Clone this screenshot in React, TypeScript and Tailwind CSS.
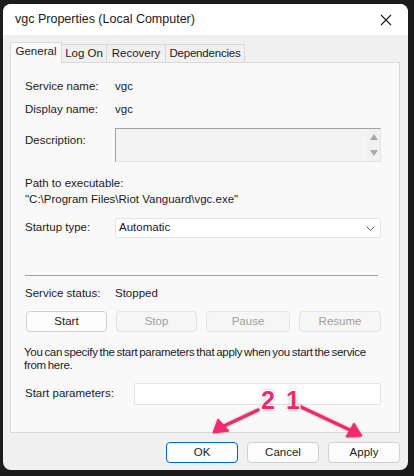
import React from "react";

const font = { fontFamily: '"Liberation Sans", Arial, sans-serif' };

function Btn({ label, disabled, primary, w }: { label: string; disabled?: boolean; primary?: boolean; w: string }) {
  return (
    <div
      className={`${w} h-[21px] flex items-center justify-center rounded-[4px] border text-[11.5px] ${
        disabled
          ? "border-[#e3e3e3] bg-[#f6f6f6] text-[#9d9d9d]"
          : primary
          ? "border-[#0067c0] bg-[#fdfdfd] text-[#1b1b1b]"
          : "border-[#d0d0d0] bg-[#fdfdfd] text-[#1b1b1b]"
      }`}
    >
      {label}
    </div>
  );
}

const numStyle = {
  fontFamily: '"Liberation Sans", Arial, sans-serif',
  textShadow: "1px 1px 0 #fff, -1px -1px 0 #fff, 1px -1px 0 #fff, -1px 1px 0 #fff, 0 1px 0 #fff, 0 -1px 0 #fff, 1px 0 0 #fff, -1px 0 0 #fff, 0 0 4px rgba(0,0,0,0.45)",
};

export default function App() {
  return (
    <div className="relative w-[414px] h-[476px] bg-[#1c1c1c] pt-[4px] pl-[3px]" style={font}>
      <div className="w-[405px] h-[466px] rounded-[8px] overflow-hidden bg-[#f0f0f0] flex flex-col">
        {/* title bar */}
        <div className="h-[31px] bg-white flex items-center pl-[12px] pr-[8px] shrink-0">
          <div className="text-[12.5px] text-[#1b1b1b] flex-1">vgc Properties (Local Computer)</div>
          <svg width="12" height="12" viewBox="0 0 12 12" className="mr-[8px]">
            <path d="M1 1 L11 11 M11 1 L1 11" stroke="#1b1b1b" strokeWidth="1.1" />
          </svg>
        </div>
        {/* body */}
        <div className="px-[7px] pt-[7px] flex flex-col">
          {/* tabs */}
          <div className="flex items-end h-[20px] text-[11.5px] text-[#1b1b1b]">
            <div className="h-[21px] w-[52px] -mb-[1px] bg-[#f9f9f9] border border-b-0 border-[#d9d9d9] flex items-center justify-center pb-[2px] relative z-10">
              General
            </div>
            <div className="h-[18px] w-[45px] border-t border-r border-[#d9d9d9] flex items-center justify-center">Log On</div>
            <div className="h-[18px] w-[59px] border-t border-r border-[#d9d9d9] flex items-center justify-center">Recovery</div>
            <div className="h-[18px] w-[79px] border-t border-r border-[#d9d9d9] flex items-center justify-center tracking-[-0.2px]">Dependencies</div>
          </div>
          {/* panel */}
          <div className="w-[390px] h-[371px] bg-[#f9f9f9] border border-[#d9d9d9] pl-[14px] pr-[18px] text-[11.5px] text-[#1b1b1b] flex flex-col">
            <div className="mt-[15px] h-[18px] flex items-center">
              <div className="w-[90px]">Service name:</div>
              <div>vgc</div>
            </div>
            <div className="mt-[5px] h-[18px] flex items-center">
              <div className="w-[90px]">Display name:</div>
              <div>vgc</div>
            </div>
            <div className="mt-[9px] flex">
              <div className="w-[90px] pt-[4px]">Description:</div>
              <div className="flex-1 h-[34px] border border-t-[#a0a0a0] border-l-[#a0a0a0] border-r-[#e3e3e3] border-b-[#e3e3e3] bg-[#f3f3f3] flex justify-end">
                <div className="w-[13px] bg-[#f0f0f0] flex flex-col items-center justify-between py-[5px]">
                  <svg width="8" height="6" viewBox="0 0 8 6"><path d="M4 0 L8 6 L0 6 Z" fill="#a8a8a8" /></svg>
                  <svg width="8" height="6" viewBox="0 0 8 6"><path d="M0 0 L8 0 L4 6 Z" fill="#a8a8a8" /></svg>
                </div>
              </div>
            </div>
            <div className="mt-[14px] h-[16px] flex items-center">Path to executable:</div>
            <div className="h-[16px] flex items-center">"C:\Program Files\Riot Vanguard\vgc.exe"</div>
            <div className="mt-[10px] flex items-center h-[20px]">
              <div className="w-[90px]">Startup type:</div>
              <div className="flex-1 h-[20px] bg-white border border-[#e5e5e5] rounded-[2px] flex items-center pl-[3px] pr-[5px]">
                <div className="flex-1">Automatic</div>
                <svg width="9" height="5" viewBox="0 0 9 5"><path d="M0.5 0.5 L4.5 4.5 L8.5 0.5" stroke="#5c5c5c" fill="none" strokeWidth="1" /></svg>
              </div>
            </div>
            <div className="mt-[37px] h-px bg-[#a0a0a0] mr-[3px]" />
            <div className="mt-[9px] h-[18px] flex items-center">
              <div className="w-[90px]">Service status:</div>
              <div>Stopped</div>
            </div>
            <div className="mt-[8px] flex gap-[9px] pl-[1px]">
              <Btn label="Start" w="w-[81px]" />
              <Btn label="Stop" w="w-[81px]" disabled />
              <Btn label="Pause" w="w-[84px]" disabled />
              <Btn label="Resume" w="w-[82px]" disabled />
            </div>
            <div className="mt-[14px] leading-[13px] -ml-[1px] tracking-[-0.3px] [word-spacing:-1px]">
              You can specify the start parameters that apply when you start the service from here.
            </div>
            <div className="mt-[11px] flex items-center h-[22px]">
              <div className="w-[109px]">Start parameters:</div>
              <div className="flex-1 h-[22px] bg-white border border-[#e3e3e3] rounded-[2px]" />
            </div>
          </div>
          {/* bottom buttons */}
          <div className="mt-[9px] flex justify-end gap-[9px] pr-[1px]">
            <Btn label="OK" w="w-[72px]" primary />
            <Btn label="Cancel" w="w-[72px]" />
            <Btn label="Apply" w="w-[72px]" />
          </div>
        </div>
      </div>
      {/* annotations */}
      <svg className="absolute left-0 top-0 pointer-events-none" width="414" height="476" viewBox="0 0 414 476">
        <defs>
          <filter id="sh" x="-20%" y="-20%" width="140%" height="140%">
            <feDropShadow dx="0" dy="0" stdDeviation="0.8" floodColor="#000" floodOpacity="0.35" />
          </filter>
        </defs>
        <g filter="url(#sh)" fill="#f0296e" stroke="#f0296e">
          <path d="M258 410 L224 426" strokeWidth="3.5" strokeLinecap="round" fill="none" />
          <path d="M213 433 L218 419 L229 431 Z" strokeWidth="1" strokeLinejoin="round" />
          <path d="M301 407 L350 430" strokeWidth="3.5" strokeLinecap="round" fill="none" />
          <path d="M362 436 L346 437 L354 423 Z" strokeWidth="1" strokeLinejoin="round" />
        </g>
      </svg>
      <div className="absolute left-[261px] top-[388px] text-[25px] leading-[25px] font-bold text-[#f0296e]" style={numStyle}>
        2
      </div>
      <div className="absolute left-[286px] top-[388px] text-[25px] leading-[25px] font-bold text-[#f0296e]" style={numStyle}>
        1
      </div>
    </div>
  );
}
